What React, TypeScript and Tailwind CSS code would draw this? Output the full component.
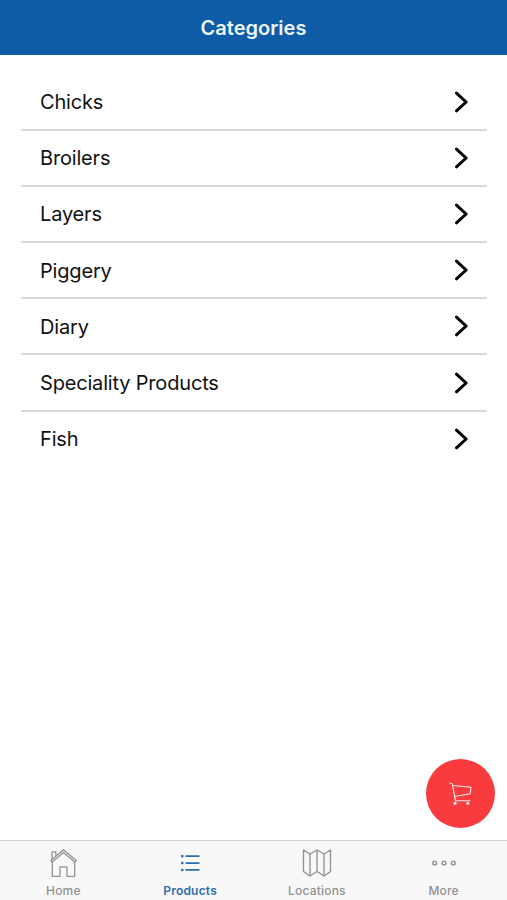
const CATEGORIES = [
  'Chicks',
  'Broilers',
  'Layers',
  'Piggery',
  'Diary',
  'Speciality Products',
  'Fish',
]

function HomeIcon() {
  return (
    <svg width="28" height="30" viewBox="0 0 28 30" fill="none" stroke="currentColor" strokeWidth="1.3" strokeLinejoin="round">
      <path d="M1.800 12.400 14.500 1.800l12.700 10.600-1.300 1.600L14.500 4.500 3.100 14Z" />
      <path d="M3 11.200V3.800h3.800v4" />
      <path d="M3.300 14v14.300h7.700v-9.500h7v9.500h7.700V14" />
    </svg>
  )
}

function ListIcon() {
  return (
    <svg width="20" height="18" viewBox="0 0 20 18" fill="currentColor">
      <rect x="1" y="0.900" width="2.500" height="2.500" rx="0.700" />
      <rect x="1" y="7.800" width="2.500" height="2.500" rx="0.700" />
      <rect x="1" y="14.700" width="2.500" height="2.500" rx="0.700" />
      <path d="M5.500 1.300H19.500v1.700H5.500zM5.500 8.200H19.500v1.700H5.500zM5.500 15.100H19.500v1.700H5.500z" />
    </svg>
  )
}

function MapIcon() {
  return (
    <svg width="30" height="30" viewBox="0 0 30 30" fill="none" stroke="currentColor" strokeWidth="1.35" strokeLinejoin="round">
      <path d="M1.500 2 8 6l7-4 7 4 6.500-4v21.500L22 28l-7-4.500L8 28l-6.500-4.500Z" />
      <path d="M8 6v22M15 2v21.500M22 6v22" />
    </svg>
  )
}

function MoreIcon() {
  return (
    <svg width="26" height="8" viewBox="0 0 26 8" fill="none" stroke="currentColor" strokeWidth="1.4">
      <circle cx="3.700" cy="4" r="1.900" />
      <circle cx="13" cy="4" r="1.900" />
      <circle cx="22.300" cy="4" r="1.900" />
    </svg>
  )
}

function CartIcon() {
  return (
    <svg width="24" height="24" viewBox="0 0 24 24" fill="none" stroke="currentColor" strokeWidth="1.100" strokeLinecap="round" strokeLinejoin="round">
      <path d="M.8 1 3.300 1.800l3.100 16.900h14.400" />
      <path d="m3.700 3.500 18.300 1.800-.8 6.400L5.600 14.500" />
      <circle cx="6" cy="21.300" r="1.100" fill="currentColor" />
      <circle cx="18.900" cy="21.300" r="1.100" fill="currentColor" />
    </svg>
  )
}

const TABS = [
  { label: 'Home',      Icon: HomeIcon, active: false },
  { label: 'Products',  Icon: ListIcon, active: true  },
  { label: 'Locations', Icon: MapIcon,  active: false },
  { label: 'More',      Icon: MoreIcon, active: false },
]

export default function App() {
  return (
    <div className="relative flex h-screen flex-col bg-white font-['Inter',sans-serif] text-black">

      {/* Header */}
      <header className="flex h-[54.5px] shrink-0 items-center justify-center bg-[#0e5ba6] pt-px">
        <h1 className="text-[20px] font-semibold tracking-normal text-[#edf5fd]">Categories</h1>
      </header>

      {/* Category list */}
      <main className="flex-1 pt-5 pr-5 pl-[21px]">
        {CATEGORIES.map((name) => (
          <div
            key={name}
            className="flex h-[56.2px] items-center justify-between border-b-2 border-[#dadadc] pr-[19px] pl-[19px] last:border-transparent"
          >
            <span className="pt-px text-[20px] tracking-[-0.18px] text-[#111]">{name}</span>
            <svg width="14" height="22" viewBox="0 0 14 22" fill="none" stroke="currentColor" strokeWidth="3" strokeLinecap="round" strokeLinejoin="round">
              <path d="m2.500 2.200 9.600 8.800-9.600 8.800" />
            </svg>
          </div>
        ))}
      </main>

      {/* Floating cart button */}
      <button className="absolute right-[12px] bottom-[72px] flex size-[69px] items-center justify-center rounded-full bg-[#f93b3d] text-white/90">
        <CartIcon />
      </button>

      {/* Tab bar */}
      <nav className="grid h-[60px] shrink-0 grid-cols-4 border-t border-[#d2d2d3] bg-[#f8f8f8]">
        {TABS.map(({ label, Icon, active }) => (
          <div
            key={label}
            className={`flex flex-col items-center pt-[7px] ${active ? 'text-[#2d6eae]' : 'text-[#929292]'}`}
          >
            <span className="flex h-[30px] items-center">
              <Icon />
            </span>
            <span className={`mt-[5px] text-[12px] leading-4 tracking-[0.2px] ${active ? 'font-semibold' : 'font-medium'}`}>
              {label}
            </span>
          </div>
        ))}
      </nav>
    </div>
  )
}
